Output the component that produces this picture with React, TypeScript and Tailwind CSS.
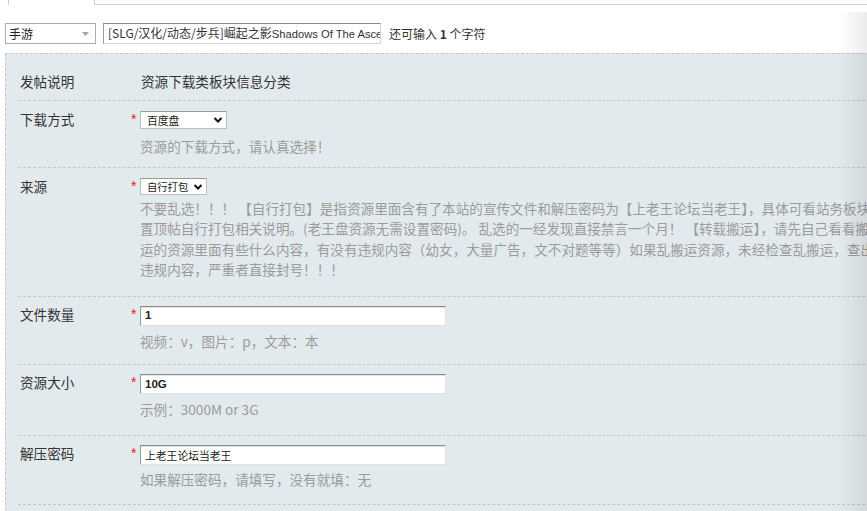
import type { ReactNode } from 'react'

const cjk = "font-['Noto_Sans_CJK_SC',sans-serif]"

function Chevron() {
  return (
    <svg width="10" height="8" viewBox="0 0 10 8" className="shrink-0">
      <polyline points="1.5,2 5,5.5 8.5,2" fill="none" stroke="#111" strokeWidth="2" />
    </svg>
  )
}

function Row({ label, star, children, className }: { label: string; star?: boolean; children: ReactNode; className: string }) {
  return (
    <div className={`flex border-b border-dashed border-[#c3c9cd] ${className}`}>
      <div className="w-[113px] shrink-0 pl-[2px] leading-[17px] text-[#333]">{label}</div>
      <div className="w-[9px] shrink-0 text-[14px] leading-[16px] text-[#e62222] font-['Liberation_Sans',sans-serif]">{star ? '*' : ''}</div>
      <div className="flex-1">{children}</div>
    </div>
  )
}

function Hint({ children, className = '' }: { children: ReactNode; className?: string }) {
  return <div className={`leading-[20.4px] text-[#9b9b9b] whitespace-nowrap ${className}`}>{children}</div>
}

function TextBox({ value, small }: { value: string; small?: boolean }) {
  return (
    <div className="w-[306px] h-[20px] flex items-center bg-white border border-[#e2e2e2] border-t-[#8a8a8a] border-l-[#9a9a9a] shadow-[inset_0_1px_1px_rgba(0,0,0,0.12)] pl-[4px]">
      <span className={small ? 'text-[10.8px] text-[#222]' : "text-[11.5px] font-bold text-[#222] font-['Liberation_Sans',sans-serif]"}>
        {value}
      </span>
    </div>
  )
}

export default function App() {
  return (
    <div className={`relative w-[867px] h-[511px] overflow-hidden bg-white ${cjk}`}>
      <div className="flex h-[5px]">
        <div className="ml-[8px] w-[87px] border-x border-[#cfcfcf]" />
        <div className="flex-1 border-b border-[#cfcfcf]" />
      </div>

      <div className="mt-[18px] pl-[5px] flex items-center h-[21px] text-[12px]">
        <div className="w-[91px] h-[21px] flex items-center justify-between border border-[#adadad] pl-[3px] pr-[6px] text-[#222]">
          <span>手游</span>
          <svg width="7" height="4" viewBox="0 0 7 4">
            <polygon points="0,0 7,0 3.5,4" fill="#a5a5a5" />
          </svg>
        </div>
        <div className="ml-[7px] w-[278px] h-[21px] flex items-center overflow-hidden border border-[#d5d5d5] border-t-[#8a8a8a] border-l-[#9a9a9a] pl-[4px] text-[#333]">
          <div className="w-full overflow-hidden whitespace-nowrap">
            [SLG/汉化/动态/步兵]崛起之影<span className="text-[11.2px] font-['Liberation_Sans',sans-serif]">Shadows Of The Ascendai</span>
          </div>
        </div>
        <div className="ml-[8px] text-[#333]">
          还可输入 <b className="font-bold">1</b> 个字符
        </div>
      </div>

      <div className="mt-[9px] ml-[5px] w-[1000px] bg-[#e3eaee] border-l border-t border-dashed border-[#c3c9cd] pl-[12px] text-[13.6px]">
        <Row label="发帖说明" className="pt-[19px] pb-[10px]">
          <div className="pl-[1px] leading-[17px] text-[#333]">资源下载类板块信息分类</div>
        </Row>

        <Row label="下载方式" star className="pt-[10px] pb-[11.5px]">
          <div className="w-[87px] h-[18px] flex items-center justify-between bg-white border border-[#bdbdbd] border-t-[#9a9a9a] pl-[6px] pr-[3px] text-[10.8px] text-[#222]">
            <span>百度盘</span>
            <Chevron />
          </div>
          <Hint className="mt-[6.5px]">资源的下载方式，请认真选择！</Hint>
        </Row>

        <Row label="来源" star className="pt-[10px] pb-[16.5px]">
          <div className="w-[67px] h-[17px] flex items-center justify-between bg-white border border-[#bdbdbd] border-t-[#9a9a9a] pl-[6px] pr-[3px] text-[10.3px] text-[#222]">
            <span>自行打包</span>
            <Chevron />
          </div>
          <div className="mt-[2.5px]">
            <Hint>不要乱选！！！ 【自行打包】是指资源里面含有了本站的宣传文件和解压密码为【上老王论坛当老王】，具体可看站务板块</Hint>
            <Hint>置顶帖自行打包相关说明。(老王盘资源无需设置密码)。 乱选的一经发现直接禁言一个月！ 【转载搬运】，请先自己看看搬</Hint>
            <Hint>运的资源里面有些什么内容，有没有违规内容（幼女，大量广告，文不对题等等）如果乱搬运资源，未经检查乱搬运，查出</Hint>
            <Hint>违规内容，严重者直接封号！！！</Hint>
          </div>
        </Row>

        <Row label="文件数量" star className="pt-[9px] pb-[13px]">
          <TextBox value="1" />
          <Hint className="mt-[5px]">视频：v，图片：p，文本：本</Hint>
        </Row>

        <Row label="资源大小" star className="pt-[9px] pb-[15px]">
          <TextBox value="10G" />
          <Hint className="mt-[5px]">示例：3000M or 3G</Hint>
        </Row>

        <Row label="解压密码" star className="pt-[9px] pb-[14.5px]">
          <TextBox value="上老王论坛当老王" small />
          <Hint className="mt-[4.5px]">如果解压密码，请填写，没有就填：无</Hint>
        </Row>

        <div className="h-[20px]" />
      </div>

      <div className="absolute right-0 top-[12px] bottom-0 w-[28px] bg-linear-to-r from-transparent to-[rgba(0,0,0,0.08)] pointer-events-none" />
    </div>
  )
}
